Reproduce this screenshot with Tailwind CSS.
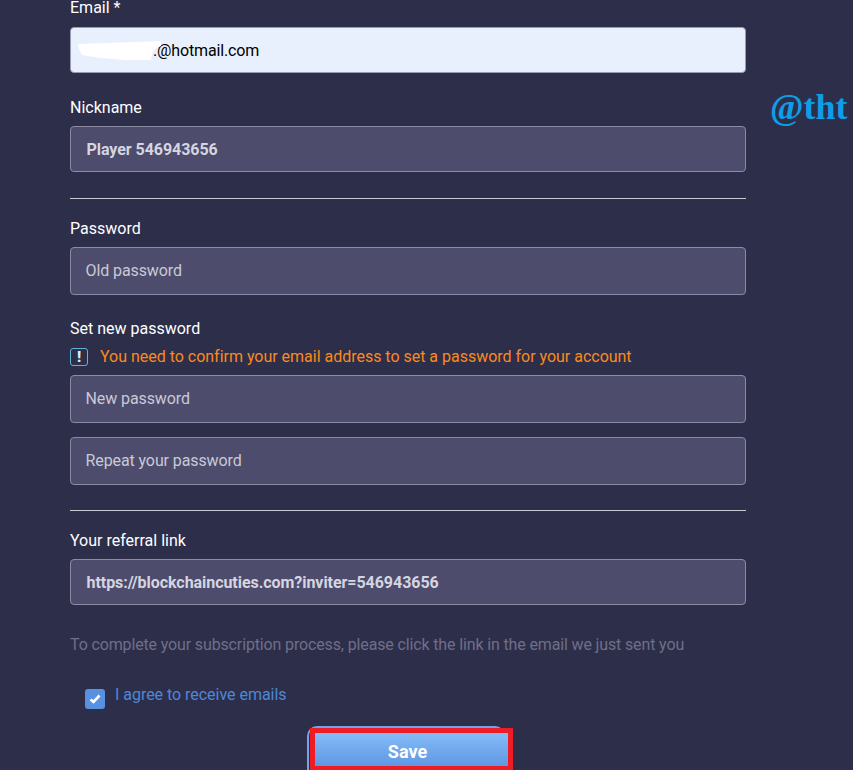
<!DOCTYPE html>
<html lang="en">
<head>
    <meta charset="UTF-8">
    <title>Profile settings</title>
    <script src="https://cdn.jsdelivr.net/npm/@tailwindcss/browser@4"></script>
</head>
<body class="bg-[#2d2e4a] font-['Roboto',sans-serif] text-white h-[770px] overflow-hidden relative">
    <!-- Watermark -->
    <div class="absolute left-[770px] top-[87px] font-['Liberation_Serif',serif] font-bold text-[36px] leading-[40px] text-[#0c9fe6]">@tht</div>

    <form class="w-[676px] ml-[70px] -mt-[2px] flex flex-col">
        <!-- Email -->
        <label class="text-base leading-5 mb-[9px]">Email *</label>
        <div class="relative h-[46px] rounded bg-[#e8f0fe] border border-[#9a9ab0] flex items-center pl-[82px] pt-[2px] text-black text-base tracking-[-0.15px]">
            .@hotmail.com
            <svg class="absolute left-[5px] top-[12px]" width="90" height="24" viewBox="0 0 90 24"><path d="M2 4 L30 3 L85 1 L85 6 L80 8 L76 13 L75 20 L50 20 L25 18 L6 15 L3 9 Z" fill="#fff"/></svg>
        </div>

        <!-- Nickname -->
        <label class="text-base leading-5 mt-[25px] mb-[8px]">Nickname</label>
        <div class="h-[46px] rounded bg-[#4d4c6d] border border-[#8b8ba3] flex items-center pl-[15.5px] pt-[2px] text-base font-bold text-[#d5d5e0] tracking-[-0.05px]">Player 546943656</div>

        <hr class="border-[#c9c9d4] mt-[26px]">

        <!-- Password -->
        <label class="text-base leading-5 mt-[20px] mb-[8px]">Password</label>
        <div class="h-[48px] rounded bg-[#4d4c6d] border border-[#8b8ba3] flex items-center pl-[14.5px] text-base text-[#c9c9d6] tracking-[-0.1px]">Old password</div>

        <label class="text-base leading-5 mt-[24px]">Set new password</label>
        <div class="flex items-center gap-[12px] h-[20px] mt-[8px] mb-[8px]">
            <span class="w-[18px] h-[18px] rounded-[3px] border border-[#5fb4dc] flex items-center justify-center text-[15px] font-black text-[#d8eef8]">!</span>
            <span class="text-base text-[#fb8a1b] tracking-[-0.015px]">You need to confirm your email address to set a password for your account</span>
        </div>
        <div class="h-[48px] rounded bg-[#4d4c6d] border border-[#8b8ba3] flex items-center pl-[14.5px] text-base text-[#c9c9d6] tracking-[-0.1px]">New password</div>
        <div class="h-[48px] rounded bg-[#4d4c6d] border border-[#8b8ba3] flex items-center pl-[14.5px] text-base text-[#c9c9d6] tracking-[-0.1px] mt-[14px]">Repeat your password</div>

        <hr class="border-[#c9c9d4] mt-[25px]">

        <!-- Referral -->
        <label class="text-base leading-5 mt-[20px] mb-[8px]">Your referral link</label>
        <div class="h-[46px] rounded bg-[#4d4c6d] border border-[#8b8ba3] flex items-center pl-[15.5px] pt-[2px] text-base font-bold text-[#d5d5e0] tracking-[-0.05px]">https://blockchaincuties.com?inviter=546943656</div>

        <p class="text-base leading-5 text-[#6f6f88] mt-[30px] tracking-[-0.14px]">To complete your subscription process, please click the link in the email we just sent you</p>

        <div class="flex items-start gap-[10px] ml-[15px] mt-[30px]">
            <span class="w-5 h-5 mt-[4px] rounded-[3px] bg-[#5891e0] flex items-center justify-center">
                <svg width="12" height="10" viewBox="0 0 12 10"><path d="M1.5 5.5 L4.5 8 L10.5 1.5" fill="none" stroke="#fff" stroke-width="2.6"/></svg>
            </span>
            <span class="text-base leading-5 text-[#4f87d8] tracking-[-0.03px]">I agree to receive emails</span>
        </div>

        <!-- Save -->
        <div class="relative w-[200px] ml-[237px] mt-[17px] h-[60px]">
            <div class="absolute left-0 top-0 w-[198px] h-[60px] rounded-[10px] border-2 border-[#6fa5ea]"></div>
            <button type="button" class="absolute left-[3px] top-[2px] w-[203px] h-[43px] border-[5px] border-[#ee1c25] bg-gradient-to-b from-[#86bcf8] to-[#5f97e4] text-white font-bold text-lg pr-[8px] pt-[5px]">Save</button>
        </div>
    </form>
</body>
</html>
